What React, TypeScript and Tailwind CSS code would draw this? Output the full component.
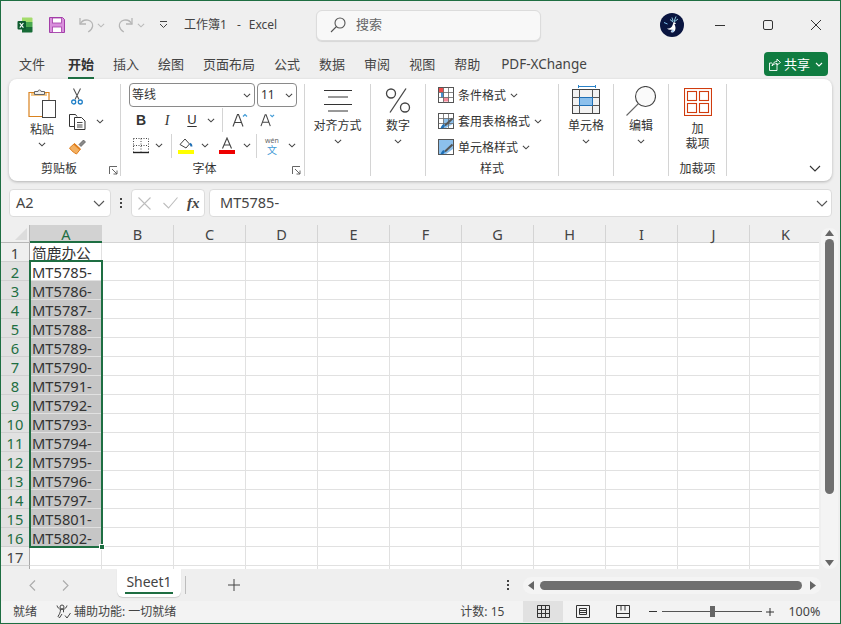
import React from 'react';

const Chevron = ({ className = '' }: { className?: string }) => (
  <svg width="8" height="5" viewBox="0 0 9 5" className={className} fill="none" stroke="#444" strokeWidth="1.2">
    <path d="M1 0.7 L4.5 4 L8 0.7" />
  </svg>
);

const ExcelLogo = () => (
  <svg width="16" height="16" viewBox="0 0 16 16">
    <path d="M5 0.5h9.5a1 1 0 0 1 1 1V5H5z" fill="#a4dc6c" />
    <rect x="5" y="5" width="10.5" height="5" fill="#4aa84f" />
    <path d="M5 10h10.5v4.5a1 1 0 0 1-1 1H5z" fill="#176b36" />
    <rect x="0.5" y="4" width="8.5" height="8.5" rx="1" fill="#0e5c2f" />
    <path d="M2.8 6l3.6 4.6M6.4 6l-3.6 4.6" stroke="#fff" strokeWidth="1.2" />
  </svg>
);

const SaveIcon = () => (
  <svg width="16" height="16" viewBox="0 0 16 16">
    <path d="M0.5 0.5h13l2 2v13h-15z" fill="#d98fdc" stroke="#a33ea8" />
    <rect x="3.5" y="1" width="9" height="5" fill="#fff" stroke="#a33ea8" strokeWidth="0.8" />
    <rect x="3.5" y="10" width="9" height="5.5" fill="#fff" stroke="#a33ea8" strokeWidth="0.8" />
  </svg>
);

const UndoIcon = ({ flip = false }: { flip?: boolean }) => (
  <svg width="15" height="16" viewBox="0 0 15 16" fill="none" stroke="#b5b5b5" strokeWidth="1.3" className={flip ? '-scale-x-100' : ''}>
    <path d="M1 1v6h6" />
    <path d="M1.2 7C3 3.5 6 2.6 9 3.2c3.5.8 5 3.6 4.6 6.2-.4 2.4-2 4-4.4 5.6" />
  </svg>
);

const Avatar = () => (
  <svg width="24" height="24" viewBox="0 0 24 24">
    <circle cx="12" cy="12" r="12" fill="#0a1540" />
    <path d="M12 4.500l1 3.500M16 3.500l-2 5M10 6.500l3 2.500M18 6l-4 3" stroke="#9fe0f5" strokeWidth="0.900" fill="none" />
    <path d="M13.500 9c1 .3 2 .5 2.500 1.500-.5.500-1.200.7-1.800.6 1.300 2 1.800 4.400.8 6.400-1 2-3 2.500-4.500 1.500 1-.5 1.300-1.500 1-2.500-1.500.5-3 .3-4.500-1 2 0 3.500-.5 4.500-1.500.8-.9 1.500-2.500 2-5z" fill="#fff" />
    <path d="M4 9.500l3.500 1.500" stroke="#7fc4f0" strokeWidth="1" />
    <path d="M12.500 16c1 .500 1.500 1.500 1.200 3-.8.300-1.700.2-2.500-.2.800-.8 1.200-1.800 1.300-2.800z" fill="#9cc8f2" />
  </svg>
);

const PasteIcon = () => (
  <svg width="28" height="30" viewBox="0 0 28 30" fill="none">
    <path d="M1 4.500h20v24H1z" fill="#fff" stroke="#d9821f" strokeWidth="1.200" />
    <path d="M3 6.500h16" stroke="#f3c88a" strokeWidth="3" />
    <path d="M6.500 6V3.500h3.500a1.500 1.500 0 0 1 3 0h3.500V6.500h-10z" fill="#efefef" stroke="#666" />
    <rect x="14.500" y="12.500" width="13" height="17" fill="#fff" stroke="#444" />
  </svg>
);

const ScissorsIcon = () => (
  <svg width="12" height="17" viewBox="0 0 12 17" fill="none">
    <path d="M2.500 0.500L8 11.500M9.500 0.500L4 11.500" stroke="#555" strokeWidth="1.100" />
    <circle cx="2.700" cy="14" r="2" stroke="#1f7fc7" strokeWidth="1.300" />
    <circle cx="9.300" cy="14" r="2" stroke="#1f7fc7" strokeWidth="1.300" />
  </svg>
);

const CopyIcon = () => (
  <svg width="17" height="16" viewBox="0 0 17 16" fill="none" stroke="#333" strokeWidth="1">
    <path d="M6 12.500H0.500V0.500H6.500L8 2.500" />
    <path d="M5.500 3.500h7l3.500 3.500v8.500H5.500z" fill="#fff" />
    <path d="M8 8.500h5.500M8 11h5.500M8 13h5.500" strokeWidth="0.900" />
  </svg>
);

const BrushIcon = () => (
  <svg width="17" height="16" viewBox="0 0 17 16" fill="none">
    <path d="M10 5.500l4.500-4.500 2 2-4.500 4.500z" fill="#888" stroke="#555" strokeWidth="0.700" />
    <path d="M0.500 9l5-4.500 6 5.500-4 5c-2-1-5-3-7-6z" fill="#f3b061" stroke="#df7d1c" />
    <path d="M5 5l6 5.500" stroke="#df7d1c" strokeWidth="1.500" />
  </svg>
);

const Launcher = () => (
  <svg width="9" height="9" viewBox="0 0 9 9" fill="none" stroke="#555" strokeWidth="0.900">
    <path d="M0.500 8V0.500H8" />
    <path d="M3 3l5 5M8 4.500V8H4.500" />
  </svg>
);

const BordersIcon = () => (
  <svg width="16" height="16" viewBox="0 0 16 16" fill="none">
    <path d="M0.500 0.500h15M0.500 0.500v13M15.500 0.500v13M0.500 7.500h15M8 0.500v13" stroke="#444" strokeDasharray="1 1.500" />
    <path d="M0 14.500h16" stroke="#222" strokeWidth="1.400" />
  </svg>
);

const FillIcon = () => (
  <svg width="16" height="17" viewBox="0 0 16 17" fill="none">
    <path d="M2 7.500L7 2l4.500 5-3.500 4z" fill="#fff" stroke="#444" strokeWidth="1" />
    <path d="M12 6.500c1 1 1.500 2 1.500 3" stroke="#1f6fb5" strokeWidth="2" />
    <rect x="0" y="13" width="16" height="4" fill="#ffff00" />
  </svg>
);

const FontColorIcon = () => (
  <svg width="16" height="17" viewBox="0 0 16 17" fill="none">
    <path d="M3.500 11.500L8 1l4.500 10.500M5 8h6" stroke="#444" strokeWidth="1.100" />
    <rect x="0" y="13" width="16" height="4" fill="#ee0000" />
  </svg>
);

const GrowIcon = ({ down = false }: { down?: boolean }) => (
  <svg width={down ? 15 : 16} height="14" viewBox="0 0 16 14" fill="none">
    <path d="M1 13.500L5.500 1.500h1L11 13.500M3 9.500h6" stroke="#444" strokeWidth="1.100" />
    <path d={down ? 'M11 1.500L13 3.500L15 1.500' : 'M11 3.500L13 1.500L15 3.500'} stroke="#3f9ad6" strokeWidth="1.200" />
  </svg>
);

const AlignIcon = () => (
  <svg width="28" height="22" viewBox="0 0 28 22" stroke="#333" strokeWidth="1">
    <path d="M0 0.500h28M4 7h20M0 14.500h28M4 21h20" />
  </svg>
);

const PercentIcon = () => (
  <svg width="26" height="25" viewBox="0 0 26 25" fill="none" stroke="#444" strokeWidth="1.300">
    <circle cx="6" cy="5.500" r="4.500" />
    <circle cx="20" cy="19.500" r="4.500" />
    <path d="M21 0.500L5 24.500" />
  </svg>
);

const StyleTable = ({ kind }: { kind: 'cond' | 'table' | 'cell' }) => (
  <svg width="16" height="16" viewBox="0 0 16 16" fill="none">
    <rect x="0.500" y="0.500" width="15" height="15" fill="#fff" stroke="#555" />
    {kind === 'cond' && (
      <>
        <rect x="1" y="1" width="4.500" height="4.500" fill="#ef4b4b" />
        <rect x="3" y="5.500" width="3" height="5" fill="#4a90d0" />
        <rect x="5" y="10.500" width="6" height="4" fill="#f58a9a" />
      </>
    )}
    {kind === 'table' && <path d="M5.500 5.500h10v5L8 15H5.500z" fill="#8cc0ec" />}
    {kind === 'cell' && <path d="M1 1h14v9L8 15H1z" fill="#8cc0ec" />}
    {kind !== 'cell' && <path d="M0.500 5.500h15M0.500 10.500h15M5.500 0.500v15M10.500 0.500v15" stroke="#666" strokeWidth="0.800" />}
    {kind !== 'cond' && (
      <>
        <path d="M14.500 5.500L7 12.500" stroke="#555" strokeWidth="2" />
        <path d="M2.500 15.500c2 .3 4-1 4.500-3L5.500 11c-1.500 1-2.500 2.500-3 4.500z" fill="#1f6fb5" />
      </>
    )}
  </svg>
);

const CellsIcon = () => (
  <svg width="28" height="29" viewBox="0 0 28 29" fill="none">
    <path d="M6.500 0v3M23.500 0v3M6.500 1.500h17" stroke="#2a82c8" />
    <rect x="0.500" y="4.500" width="27" height="24" fill="#f2f2f2" stroke="#444" />
    <path d="M0.500 12.500h27M0.500 20.500h27M7.500 4.500v24M20.500 4.500v24" stroke="#555" />
    <rect x="7.500" y="12.500" width="13" height="8" fill="#8cc0ec" stroke="#1f6fb5" />
  </svg>
);

const SearchBig = () => (
  <svg width="30" height="30" viewBox="0 0 30 30" fill="none">
    <circle cx="19.500" cy="10.500" r="10" fill="#fafafa" stroke="#444" strokeWidth="1.100" />
    <path d="M12.500 17.500L0.500 29.500" stroke="#666" strokeWidth="1.100" />
  </svg>
);

const AddinIcon = () => (
  <svg width="28" height="28" viewBox="0 0 28 28" fill="none" stroke="#d03c0e" strokeWidth="1.100">
    <rect x="0.500" y="0.500" width="27" height="27" />
    <rect x="3.500" y="3.500" width="9" height="9" />
    <rect x="15.500" y="3.500" width="9" height="9" />
    <rect x="3.500" y="15.500" width="9" height="9" />
    <rect x="15.500" y="15.500" width="9" height="9" />
  </svg>
);

const Large = ({ icon, label, w }: { icon: React.ReactNode; label: string; w: string }) => (
  <div className={`flex flex-col items-center ${w}`}>
    <div className="flex h-[33px] items-center justify-center">{icon}</div>
    <div className="h-[18px] text-[12px] leading-[18px]">{label}</div>
    <Chevron className="mt-[4px]" />
  </div>
);

const GroupLabel = ({ text, className = '' }: { text: string; className?: string }) => (
  <div className={`mb-[-2px] mt-auto h-[18px] text-center text-[12px] leading-[18px] ${className}`}>{text}</div>
);

const rows = ['简鹿办公', 'MT5785-', 'MT5786-', 'MT5787-', 'MT5788-', 'MT5789-', 'MT5790-', 'MT5791-', 'MT5792-', 'MT5793-', 'MT5794-', 'MT5795-', 'MT5796-', 'MT5797-', 'MT5801-', 'MT5802-', '', ''];
const cols = ['B', 'C', 'D', 'E', 'F', 'G', 'H', 'I', 'J', 'K'];
const tabs = ['文件', '开始', '插入', '绘图', '页面布局', '公式', '数据', '审阅', '视图', '帮助'];

const Ribbon = () => (
  <div className="ml-2 flex h-[102px] w-[823px] rounded-lg bg-white py-[5px] text-[#333] shadow-[0_1px_3px_rgba(0,0,0,0.25)]">
    {/* 剪贴板 */}
    <div className="relative flex w-[112px] flex-col border-r border-[#d4d4d4]">
      <div className="flex">
        <div className="ml-[11px] flex w-[44px] flex-col items-center">
          <div className="mt-[4px]"><PasteIcon /></div>
          <div className="mt-[3px] h-[18px] text-[12px] leading-[18px]">粘贴</div>
          <Chevron className="mt-[3px]" />
        </div>
        <div className="flex w-[26px] flex-col items-center">
          <div className="flex h-[25px] items-center"><ScissorsIcon /></div>
          <div className="flex h-[25px] items-center"><CopyIcon /></div>
          <div className="flex h-[25px] items-center"><BrushIcon /></div>
        </div>
        <Chevron className="ml-[6px] mt-[35px]" />
      </div>
      <GroupLabel text="剪贴板" className="pr-[11px]" />
      <div className="absolute bottom-[1px] right-[2px]"><Launcher /></div>
    </div>
    {/* 字体 */}
    <div className="relative flex w-[184px] flex-col border-r border-[#d4d4d4]">
      <div className="-mt-px ml-2 flex h-[24px] gap-[2px] text-[12px]">
        <div className="flex w-[126px] items-center justify-between rounded border border-[#8a8a8a] pl-[2px] pr-[3px]">
          <span>等线</span>
          <Chevron />
        </div>
        <div className="flex w-[40px] items-center justify-between rounded border border-[#8a8a8a] px-[3px]">
          <span>11</span>
          <Chevron />
        </div>
      </div>
      <div className="flex h-[26px] items-center pl-[7px]">
        <span className="w-[26px] text-center font-['Liberation_Sans',sans-serif] text-[14px] font-bold">B</span>
        <span className="w-[26px] text-center font-['Liberation_Serif',serif] text-[14px] italic">I</span>
        <span className="w-[24px] text-center font-['Liberation_Sans',sans-serif] text-[13px] underline underline-offset-2">U</span>
        <span className="flex w-[14px] justify-center"><Chevron /></span>
        <span className="ml-[4px] h-[24px] border-l border-[#d4d4d4]" />
        <span className="ml-[6px] flex w-[22px] justify-center"><GrowIcon /></span>
        <span className="ml-[5px] flex w-[22px] justify-center"><GrowIcon down /></span>
      </div>
      <div className="flex h-[25px] items-center pl-[7px]">
        <span className="flex w-[26px] justify-center"><BordersIcon /></span>
        <span className="flex w-[10px] justify-center"><Chevron /></span>
        <span className="ml-[7px] h-[24px] border-l border-[#d4d4d4]" />
        <span className="ml-[6px] flex w-[16px] justify-center"><FillIcon /></span>
        <span className="ml-[5px] flex w-[12px] justify-center"><Chevron /></span>
        <span className="ml-[8px] flex w-[16px] justify-center"><FontColorIcon /></span>
        <span className="ml-[6px] flex w-[12px] justify-center"><Chevron /></span>
        <span className="ml-[3px] h-[24px] border-l border-[#d4d4d4]" />
        <span className="ml-[6px] flex w-[18px] flex-col items-center">
          <span className="h-[9px] text-[7px] leading-[9px] text-[#666]">wén</span>
          <span className="h-[10px] text-[10px] leading-[10px] text-[#3f9ad6]">文</span>
        </span>
        <span className="ml-[5px] flex w-[12px] justify-center"><Chevron /></span>
      </div>
      <GroupLabel text="字体" className="pr-[16px]" />
      <div className="absolute bottom-[1px] right-[3px]"><Launcher /></div>
    </div>
    {/* 对齐方式 */}
    <div className="flex w-[66px] flex-col border-r border-[#d4d4d4]">
      <Large w="w-full" icon={<AlignIcon />} label="对齐方式" />
    </div>
    {/* 数字 */}
    <div className="flex w-[55px] flex-col border-r border-[#d4d4d4]">
      <Large w="w-full" icon={<PercentIcon />} label="数字" />
    </div>
    {/* 样式 */}
    <div className="flex w-[133px] flex-col border-r border-[#d4d4d4] pl-3 text-[12px]">
      <div className="-mt-[2px]">
        {[
          { kind: 'cond' as const, text: '条件格式' },
          { kind: 'table' as const, text: '套用表格格式' },
          { kind: 'cell' as const, text: '单元格样式' },
        ].map((item) => (
          <div key={item.text} className="flex h-[26px] items-center">
            <StyleTable kind={item.kind} />
            <span className="ml-1 mt-[2px] leading-[16px]">{item.text}</span>
            <Chevron className="ml-1" />
          </div>
        ))}
      </div>
      <GroupLabel text="样式" className="pr-3" />
    </div>
    {/* 单元格 */}
    <div className="flex w-[55px] flex-col border-r border-[#d4d4d4]">
      <Large w="w-full" icon={<div className="-mt-[3px]"><CellsIcon /></div>} label="单元格" />
    </div>
    {/* 编辑 */}
    <div className="flex w-[55px] flex-col border-r border-[#d4d4d4]">
      <Large w="w-full" icon={<SearchBig />} label="编辑" />
    </div>
    {/* 加载项 */}
    <div className="flex w-[58px] flex-col items-center border-r border-[#d4d4d4]">
      <div className="mt-[4px]"><AddinIcon /></div>
      <div className="mt-[5px] text-center text-[12px] leading-[15px]">加<br />裁项</div>
      <GroupLabel text="加裁项" />
    </div>
    <div className="flex flex-1 items-end justify-end pb-[4px] pr-[11px]">
      <svg width="12" height="7" viewBox="0 0 12 7" fill="none" stroke="#333" strokeWidth="1.100"><path d="M1 1l5 5 5-5" /></svg>
    </div>
  </div>
);

const FormulaBar = () => (
  <div className="ml-2 mt-2 flex h-[28px] w-[823px] text-[14.5px] text-[#444]">
    <div className="flex w-[102px] items-center justify-between rounded border border-[#dcdcdc] bg-white pl-[6px] pr-[5px]">
      <span>A2</span>
      <svg width="12" height="7" viewBox="0 0 12 7" fill="none" stroke="#555" strokeWidth="1.100"><path d="M1 1l5 5 5-5" /></svg>
    </div>
    <div className="flex w-[20px] flex-col items-center justify-center gap-[2px]">
      <span className="h-[2px] w-[2px] bg-[#444]" />
      <span className="h-[2px] w-[2px] bg-[#444]" />
      <span className="h-[2px] w-[2px] bg-[#444]" />
    </div>
    <div className="flex w-[74px] items-center rounded border border-[#dcdcdc] bg-white pl-[6px]">
      <svg width="13" height="13" viewBox="0 0 13 13" fill="none" stroke="#bdbdbd" strokeWidth="1.100"><path d="M0.500 0.500l12 12M12.500 0.500l-12 12" /></svg>
      <svg className="ml-[12px]" width="15" height="12" viewBox="0 0 15 12" fill="none" stroke="#bdbdbd" strokeWidth="1.100"><path d="M0.500 6l5 5 9-10.500" /></svg>
      <span className="ml-[9px] font-['Liberation_Serif',serif] text-[15px] font-bold italic text-[#444]">fx</span>
    </div>
    <div className="ml-1 flex flex-1 items-center justify-between rounded border border-[#dcdcdc] bg-white pl-[10px] pr-[3px]">
      <span>MT5785-</span>
      <svg width="12" height="7" viewBox="0 0 12 7" fill="none" stroke="#555" strokeWidth="1.100"><path d="M1 1l5 5 5-5" /></svg>
    </div>
  </div>
);

const Sheet = () => (
  <div className="relative mt-2 flex h-[344px] w-[839px] overflow-hidden bg-[#efefef]">
    <div className="flex w-[818px] flex-col overflow-hidden bg-white">
      {/* 列标题 */}
      <div className="flex h-[18px] shrink-0 bg-[#efefef] text-[14.5px] text-[#444]">
        <div className="relative w-[29px] shrink-0 border-r border-b border-[#b8b8b8]">
          <div className="absolute bottom-[2px] right-[2px] h-0 w-0 border-b-[12px] border-l-[12px] border-b-[#dcdcdc] border-l-transparent" />
        </div>
        <div className="w-[72px] shrink-0 border-b-2 border-[#1e6e42] bg-[#d2d2d2] text-center leading-[18px] text-[#1e6e42]">A</div>
        {cols.map((c) => (
          <div key={c} className="w-[72px] shrink-0 border-r border-b border-[#d4d4d4] text-center leading-[18px]">{c}</div>
        ))}
      </div>
      {rows.map((text, i) => {
        const picked = i >= 1 && i <= 15;
        const gray = i >= 2 && i <= 15;
        return (
          <div key={i} className="flex h-[19px] shrink-0 text-[14.7px] leading-[20px] text-[#333]">
            <div className={`w-[29px] shrink-0 border-r border-b text-center ${picked ? 'border-[#d0d0d0] bg-[#e1e1e1] text-[#1e6e42]' : 'border-r-[#a8a8a8] border-b-[#d0d0d0] bg-[#efefef] text-[#444]'}`}>{i < 17 ? i + 1 : ''}</div>
            <div className={`w-[72px] shrink-0 border-r border-b border-[#e1e1e1] pl-[2px] ${gray ? 'bg-[#c6c6c6]' : ''}`}>{text}</div>
            {cols.map((c) => (
              <div key={c} className="w-[72px] shrink-0 border-r border-b border-[#e1e1e1]" />
            ))}
          </div>
        );
      })}
    </div>
    {/* 选区 */}
    <div className="absolute left-[28px] top-[35px] h-[288px] w-[74px] border-2 border-[#1e6e42]" />
    <div className="absolute left-[98px] top-[319px] h-[6px] w-[6px] border border-white bg-[#1e6e42]" />
    {/* 滚动条 */}
    <div className="flex w-[21px] flex-col items-center pt-[3px]">
      <div className="flex h-[341px] w-[17px] flex-col items-center rounded-lg bg-[#f4f4f4]">
        <svg className="mt-[2px]" width="9" height="6" viewBox="0 0 9 6" fill="#666"><path d="M4.500 0L9 6H0z" /></svg>
        <div className="mt-[3px] h-[255px] w-[9px] rounded-full bg-[#6f6f6f]" />
        <svg className="mb-[3px] mt-auto" width="9" height="6" viewBox="0 0 9 6" fill="#666"><path d="M4.500 6L9 0H0z" /></svg>
      </div>
    </div>
  </div>
);

const SheetTabs = () => (
  <div className="flex h-[32px] items-center bg-[#efefef] text-[#444]">
    <svg className="ml-[28px]" width="7" height="11" viewBox="0 0 7 11" fill="none" stroke="#aaa" strokeWidth="1.100"><path d="M6 0.500L1 5.500l5 5" /></svg>
    <svg className="ml-[26px]" width="7" height="11" viewBox="0 0 7 11" fill="none" stroke="#aaa" strokeWidth="1.100"><path d="M1 0.500l5 5-5 5" /></svg>
    <div className="ml-[48px] flex h-[28px] w-[64px] -translate-y-[2px] flex-col items-center rounded-b-md bg-white text-[14px] shadow-[0_1px_1px_rgba(0,0,0,0.15)]">
      <span className="mt-[4px] leading-[18px]">Sheet1</span>
      <span className="mt-[1px] h-[2px] w-[48px] bg-[#1e6e42]" />
    </div>
    <span className="ml-[4px] h-[18px] border-l border-[#bdbdbd]" />
    <svg className="ml-[42px]" width="12" height="12" viewBox="0 0 12 12" stroke="#444" strokeWidth="1"><path d="M0 6h12M6 0v12" /></svg>
    <div className="ml-[267px] flex w-[2px] flex-col gap-[2px]">
      <span className="h-[2px] w-[2px] bg-[#444]" />
      <span className="h-[2px] w-[2px] bg-[#444]" />
      <span className="h-[2px] w-[2px] bg-[#444]" />
    </div>
    <div className="ml-[14px] flex h-[17px] w-[298px] items-center rounded-full bg-[#f4f4f4] pl-[5px] pr-[5px]">
      <svg width="6" height="9" viewBox="0 0 6 9" fill="#666"><path d="M0 4.500L6 0v9z" /></svg>
      <div className="ml-[6px] h-[9px] w-[262px] rounded-full bg-[#6f6f6f]" />
      <svg className="ml-auto" width="6" height="9" viewBox="0 0 6 9" fill="#666"><path d="M6 4.500L0 0v9z" /></svg>
    </div>
  </div>
);

const StatusBar = () => (
  <div className="flex h-[21px] items-center bg-[#f3f3f3] text-[12px] leading-[23px] text-[#444]">
    <span className="ml-[12px]">就绪</span>
    <svg className="ml-[19px]" width="15" height="15" viewBox="0 0 15 15" fill="none" stroke="#444" strokeWidth="1"><circle cx="6" cy="3" r="2" /><path d="M1 1.500c.5 2 2 3.500 3.500 3.800h3C9 5 10.500 3.500 11 1.500M4.500 5.300c0 3-1 5-2.500 7l1.500 1.500L6 10" /><path d="M7.500 5.300v3M9 11.500l2 2.500 3.500-5" /></svg>
    <span className="ml-[3px]">辅助功能: 一切就绪</span>
    <span className="ml-[284px]">计数: 15</span>
    <div className="ml-[19px] flex h-[21px] w-[40px] items-center justify-center bg-[#e1e1e1]">
      <svg width="13" height="13" viewBox="0 0 13 13" fill="none" stroke="#333"><path d="M0.500 0.500h12v12h-12zM0.500 4.500h12M0.500 8.500h12M4.500 0.500v12M8.500 0.500v12" /></svg>
    </div>
    <div className="flex w-[40px] justify-center">
      <svg width="14" height="13" viewBox="0 0 14 13" fill="none" stroke="#333"><path d="M0.500 0.500h13v12h-13zM3.500 3.500h7v6h-7zM3.500 5.500h7M3.500 7.500h7" /></svg>
    </div>
    <div className="flex w-[40px] justify-center">
      <svg width="14" height="13" viewBox="0 0 14 13" fill="none" stroke="#333"><path d="M0.500 0.500h13v12h-13zM0.500 8.500h13M5 0.500v5M9 0.500v5" /></svg>
    </div>
    <svg className="ml-[6px]" width="8" height="1" viewBox="0 0 8 1" stroke="#333"><path d="M0 0.500h8" /></svg>
    <div className="relative ml-[5px] h-[1px] w-[100px] bg-[#555]">
      <div className="absolute left-[48px] top-[-5px] h-[11px] w-[5px] bg-[#666]" />
    </div>
    <svg className="ml-[4px]" width="8" height="8" viewBox="0 0 8 8" stroke="#333"><path d="M0 4h8M4 0v8" /></svg>
    <span className="ml-[14px] text-[12.5px]">100%</span>
  </div>
);

export default function App() {
  return (
    <div className="h-[624px] w-[841px] overflow-hidden border border-[#1e6e42] bg-[#efefef] font-['Noto_Sans','Noto_Sans_CJK_SC',sans-serif] text-[#333]">
      {/* 标题栏 */}
      <div className="flex h-[48px] items-center text-[#444]">
        <div className="ml-4"><ExcelLogo /></div>
        <div className="ml-4"><SaveIcon /></div>
        <div className="ml-[14px]"><UndoIcon /></div>
        <Chevron className="ml-[3px] opacity-30" />
        <div className="ml-[13px]"><UndoIcon flip /></div>
        <Chevron className="ml-[4px] opacity-30" />
        <svg className="ml-[14px]" width="9" height="8" viewBox="0 0 9 8" fill="none" stroke="#444"><path d="M1 0.500h7M1 3l3.500 3.500L8 3" /></svg>
        <div className="ml-[16px] flex w-[132px] text-[12px]">
          <span>工作簿1</span>
          <span className="ml-[10px]">-</span>
          <span className="ml-[8px]">Excel</span>
        </div>
        <div className="flex h-[31px] w-[225px] items-center rounded-md border border-[#dcdcdc] bg-[#f8f8f8] pl-[13px] text-[13px] text-[#666] shadow-[0_1px_1px_rgba(0,0,0,0.1)]">
          <svg width="16" height="16" viewBox="0 0 16 16" fill="none" stroke="#555" strokeWidth="1.100"><circle cx="10" cy="6" r="5" /><path d="M6.500 9.500L1 15" /></svg>
          <span className="ml-[10px]">搜索</span>
        </div>
        <div className="ml-[119px]"><Avatar /></div>
        <svg className="ml-[31px]" width="10" height="1" viewBox="0 0 10 1" stroke="#333"><path d="M0 0.500h10" /></svg>
        <svg className="ml-[38px]" width="10" height="10" viewBox="0 0 10 10" fill="none" stroke="#333"><rect x="0.500" y="0.500" width="9" height="9" rx="1.500" /></svg>
        <svg className="ml-[38px]" width="10" height="10" viewBox="0 0 10 10" fill="none" stroke="#333"><path d="M0 0l10 10M10 0L0 10" /></svg>
      </div>
      {/* 选项卡 */}
      <div className="flex h-[30px] items-start text-[13px] text-[#444]">
        <div className="ml-[18px] flex gap-[19px] pt-[5px]">
          {tabs.map((t) => (
            <div key={t} className={`relative h-[25px] leading-[20px] ${t === '开始' ? 'ml-[4px] font-bold text-[#333]' : ''}`}>
              {t}
              {t === '开始' && <div className="absolute bottom-0 left-0 h-[2px] w-full bg-[#1e6e42]" />}
            </div>
          ))}
          <div className="ml-[2px] h-[25px] text-[13.5px] leading-[20px]">PDF-XChange</div>
        </div>
        <div className="ml-auto mr-[12px] mt-[3px] flex h-[24px] w-[64px] items-center justify-center gap-[3px] rounded bg-[#107c41] text-white">
          <svg width="12" height="13" viewBox="0 0 12 13" fill="none" stroke="#fff" strokeWidth="0.900"><path d="M8 5.500v7H0.500V5H3M3 8c.5-3 2.500-4.500 5-4.500V1l3.500 3.500L8 7V5.500C6 5.500 4 6.500 3 8z" /></svg>
          <span className="text-[13px] leading-none">共享</span>
          <svg className="ml-[2px]" width="8" height="5" viewBox="0 0 8 5" fill="none" stroke="#fff" strokeWidth="1.100"><path d="M1 1l3 3 3-3" /></svg>
        </div>
      </div>
      <Ribbon />
      <FormulaBar />
      <Sheet />
      <SheetTabs />
      <StatusBar />
    </div>
  );
}
